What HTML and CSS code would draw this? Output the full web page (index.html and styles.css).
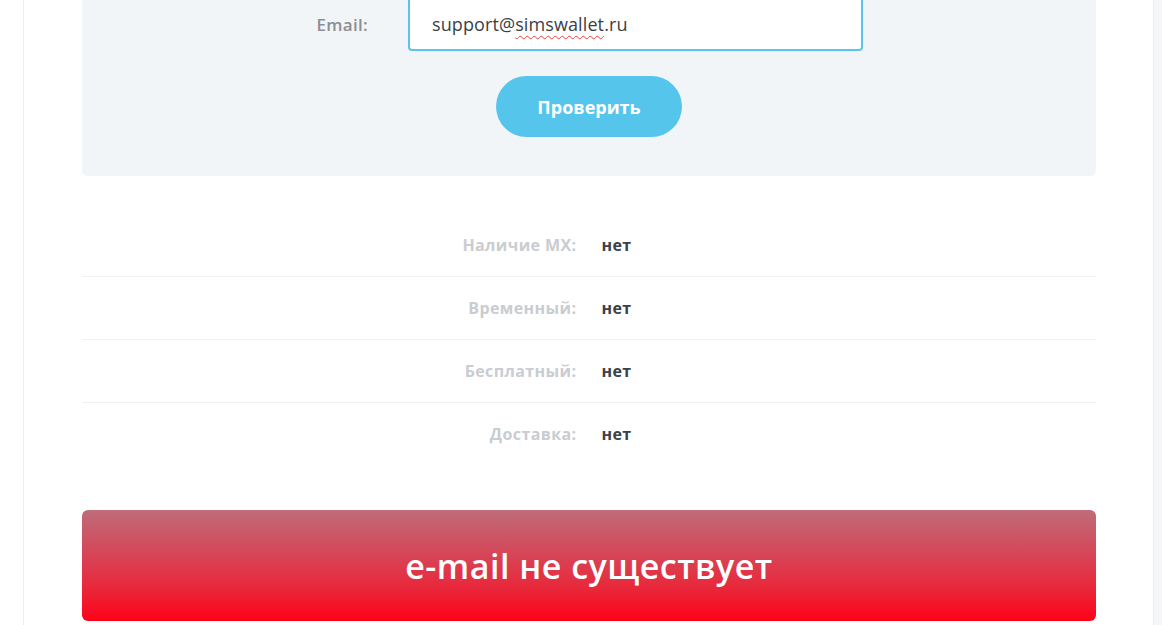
FILE: index.html
```html
<!DOCTYPE html>
<html lang="ru">
<head>
<meta charset="utf-8">
<title>Проверка email</title>
<link rel="stylesheet" href="styles.css">
</head>
<body>
<div class="page">
  <div class="gutter"></div>
  <main class="main">
    <section class="panel">
      <div class="form-row">
        <label class="form-label">Email:</label>
        <div class="input"><span>support@</span><span class="misspelled">simswallet</span><span>.ru</span></div>
      </div>
      <div class="actions">
        <button class="btn" type="button">Проверить</button>
      </div>
    </section>
    <section class="results">
      <div class="result-row"><div class="result-label">Наличие MX:</div><div class="result-value">нет</div></div>
      <div class="result-row"><div class="result-label">Временный:</div><div class="result-value">нет</div></div>
      <div class="result-row"><div class="result-label">Бесплатный:</div><div class="result-value">нет</div></div>
      <div class="result-row"><div class="result-label">Доставка:</div><div class="result-value">нет</div></div>
    </section>
    <div class="verdict">e-mail не существует</div>
  </main>
  <div class="side"></div>
</div>
</body>
</html>
```
FILE: styles.css
```css
* { box-sizing: border-box; }
html, body { margin: 0; padding: 0; height: 100%; }
body {
  background: #ffffff;
  font-family: "Open Sans", "Noto Sans", sans-serif;
  overflow: hidden;
}
.page {
  display: flex;
  min-height: 625px;
}
.gutter { width: 23px; flex: none; }
.main {
  width: 1131px;
  flex: none;
  border-left: 1px solid #eceef0;
  border-right: 1px solid #eceef0;
  padding: 0 57px 0 58px;
}
.side { flex: 1; background: #f5f6f8; }

.panel {
  background: #f2f5f7;
  border-radius: 0 0 6px 6px;
  padding: 0 0 39px;
}
.form-row {
  display: flex;
  align-items: center;
}
.form-label {
  width: 286px;
  margin-right: 40px;
  text-align: right;
  color: #8c8e92;
  font-size: 17px;
  font-weight: 600;
  letter-spacing: 0.3px;
  margin-top: -3px;
}
.input {
  width: 455px;
  height: 54px;
  margin-top: -3px;
  background: #ffffff;
  border: 2px solid #5bc4ec;
  border-radius: 4px;
  padding: 0 22px 0 22px;
  display: flex;
  align-items: center;
  color: #3a3f45;
  font-size: 18px;
  font-weight: 500;
  letter-spacing: 0.1px;
}
.misspelled {
  text-decoration: underline wavy #f03c3c;
  text-decoration-thickness: 1px;
  text-underline-offset: 4px;
}
.actions {
  display: flex;
  justify-content: center;
  margin-top: 25px;
}
.btn {
  width: 186px;
  height: 61px;
  border: 0;
  border-radius: 31px;
  background: #56c5ec;
  color: #ffffff;
  font-family: inherit;
  font-size: 18px;
  font-weight: 700;
}

.results { margin-top: 38px; }
.result-row {
  display: grid;
  grid-template-columns: 1fr 1fr;
  column-gap: 25px;
  align-items: center;
  height: 63px;
  border-bottom: 1px solid #eef0f2;
  font-size: 16px;
  font-weight: 700;
  letter-spacing: 0.4px;
}
.result-row:last-child { border-bottom: 0; height: 62px; }
.result-label { text-align: right; color: #c9ccd1; }
.result-value { color: #3a414a; }

.verdict {
  margin-top: 45px;
  height: 111px;
  border-radius: 6px;
  background: linear-gradient(to bottom, #bf6c79 0%, #d34a5c 35%, #e9283b 70%, #fe0118 100%);
  color: #ffffff;
  display: flex;
  align-items: center;
  justify-content: center;
  font-size: 34px;
  font-weight: 600;
  letter-spacing: 0.5px;
}
```
